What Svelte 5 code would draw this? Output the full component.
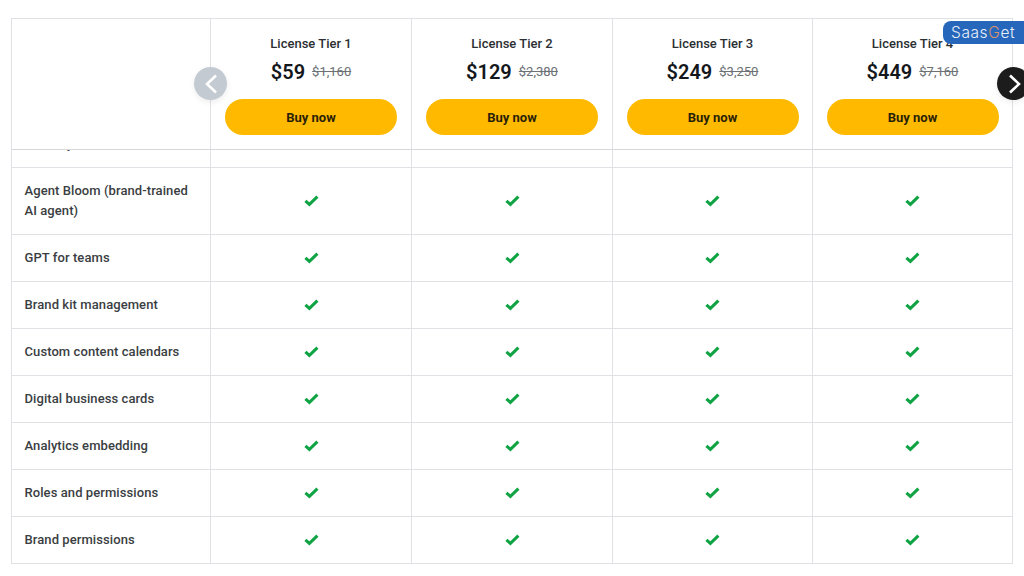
<script>
	const tiers = [
		{ name: 'License Tier 1', price: '$59', old: '$1,160' },
		{ name: 'License Tier 2', price: '$129', old: '$2,380' },
		{ name: 'License Tier 3', price: '$249', old: '$3,250' },
		{ name: 'License Tier 4', price: '$449', old: '$7,160' }
	];
	const features = [
		'Agent Bloom (brand-trained AI agent)',
		'GPT for teams',
		'Brand kit management',
		'Custom content calendars',
		'Digital business cards',
		'Analytics embedding',
		'Roles and permissions',
		'Brand permissions'
	];
</script>

<main>
	<div class="table">
		<div class="row head">
			<div class="cell"></div>
			{#each tiers as tier}
				<div class="cell tier">
					<h3>{tier.name}</h3>
					<p class="prices"><strong>{tier.price}</strong><s>{tier.old}</s></p>
					<button type="button">Buy now</button>
				</div>
			{/each}
		</div>
		<div class="row clipped">
			<div class="cell label"><span>Memory</span></div>
			{#each tiers as tier}
				<div class="cell"></div>
			{/each}
		</div>
		{#each features as feature}
			<div class="row">
				<div class="cell label">{feature}</div>
				{#each tiers as tier}
					<div class="cell check">
						<svg viewBox="0 0 15 13" aria-hidden="true"><path d="M1.4 5.8 5.4 9.4 13.4 1.6" /></svg>
					</div>
				{/each}
			</div>
		{/each}

		<button type="button" class="nav prev" aria-label="Previous">
			<svg viewBox="0 0 14 24" aria-hidden="true"><path d="M12 3.5 3 12l9 8.5" /></svg>
		</button>
		<button type="button" class="nav next" aria-label="Next">
			<svg viewBox="0 0 14 24" aria-hidden="true"><path d="M3 3.5l9 8.5-9 8.5" /></svg>
		</button>
	</div>
	<div class="badge">Saas<span>G</span>et</div>
</main>

<style>
	:global(body) {
		margin: 0;
		background: #fff;
	}
	main {
		position: relative;
		width: 1024px;
		height: 576px;
		overflow: hidden;
		padding: 18px 0 0 11px;
		box-sizing: border-box;
		font-family: Roboto, 'Liberation Sans', sans-serif;
		color: #212529;
	}
	.table {
		position: relative;
		width: 1002px;
		border-top: 1px solid #dfe1e4;
		border-left: 1px solid #dfe1e4;
		box-sizing: border-box;
	}
	.row {
		display: grid;
		grid-template-columns: 199px 201px 201px 200px 200px;
		height: 47px;
	}
	.row:nth-child(3) {
		height: 67px;
	}
	.row.head {
		height: 131px;
	}
	.row.clipped {
		height: 18px;
		overflow: hidden;
	}
	.cell {
		border-right: 1px solid #dfe1e4;
		border-bottom: 1px solid #dfe1e4;
		min-width: 0;
	}
	.head .cell {
		border-bottom-color: #d6d8db;
	}
	.label {
		display: flex;
		align-items: center;
		padding: 0 13px 0 12.5px;
		font-size: 13px;
		font-weight: 500;
		line-height: 20px;
		letter-spacing: 0.08px;
		color: #3a3e42;
	}
	.clipped .label {
		align-items: flex-start;
	}
	.clipped .label span {
		margin-top: -16px;
	}
	.tier {
		display: flex;
		flex-direction: column;
		align-items: center;
		padding: 16px 14px 0;
	}
	h3 {
		margin: 0;
		font-size: 13px;
		font-weight: 500;
		line-height: 18px;
		color: #2b2f33;
	}
	.prices {
		display: flex;
		align-items: center;
		gap: 7px;
		margin: 5px 0 0;
		line-height: 28px;
	}
	.prices strong {
		font-size: 20px;
		font-weight: 600;
		color: #14181c;
	}
	.prices s {
		font-size: 13px;
		color: #6c7175;
	}
	.tier button {
		flex: none;
		width: 172px;
		height: 36px;
		margin-top: 13px;
		border: 0;
		border-radius: 18px;
		background: #ffba00;
		font-family: inherit;
		font-size: 13px;
		font-weight: 700;
		color: #2a2208;
	}
	.check {
		display: flex;
		align-items: center;
		justify-content: center;
	}
	.check svg {
		width: 15px;
		height: 13px;
		fill: none;
		stroke: #0fa344;
		stroke-width: 3;
	}
	.nav {
		position: absolute;
		top: 48px;
		width: 33px;
		height: 33px;
		padding: 0;
		border: 0;
		border-radius: 50%;
		display: grid;
		place-items: center;
		box-shadow: 0 2px 6px rgba(0, 0, 0, 0.08);
	}
	.nav svg {
		width: 14px;
		height: 24px;
		fill: none;
		stroke: #fff;
		stroke-width: 2.6;
	}
	.prev {
		left: 182px;
		background: #c3cad1;
	}
	.next {
		left: 985px;
		background: #1c1c1c;
	}
	.badge {
		position: absolute;
		top: 21px;
		left: 943px;
		width: 81px;
		height: 23px;
		border-radius: 8px 0 0 8px;
		background: #2767bb;
		padding-left: 8px;
		box-sizing: border-box;
		font-family: Inter, sans-serif;
		font-size: 15.5px;
		font-weight: 300;
		line-height: 23px;
		letter-spacing: 0.6px;
		color: #e8f0fa;
	}
	.badge span {
		color: #d9926b;
	}
</style>
